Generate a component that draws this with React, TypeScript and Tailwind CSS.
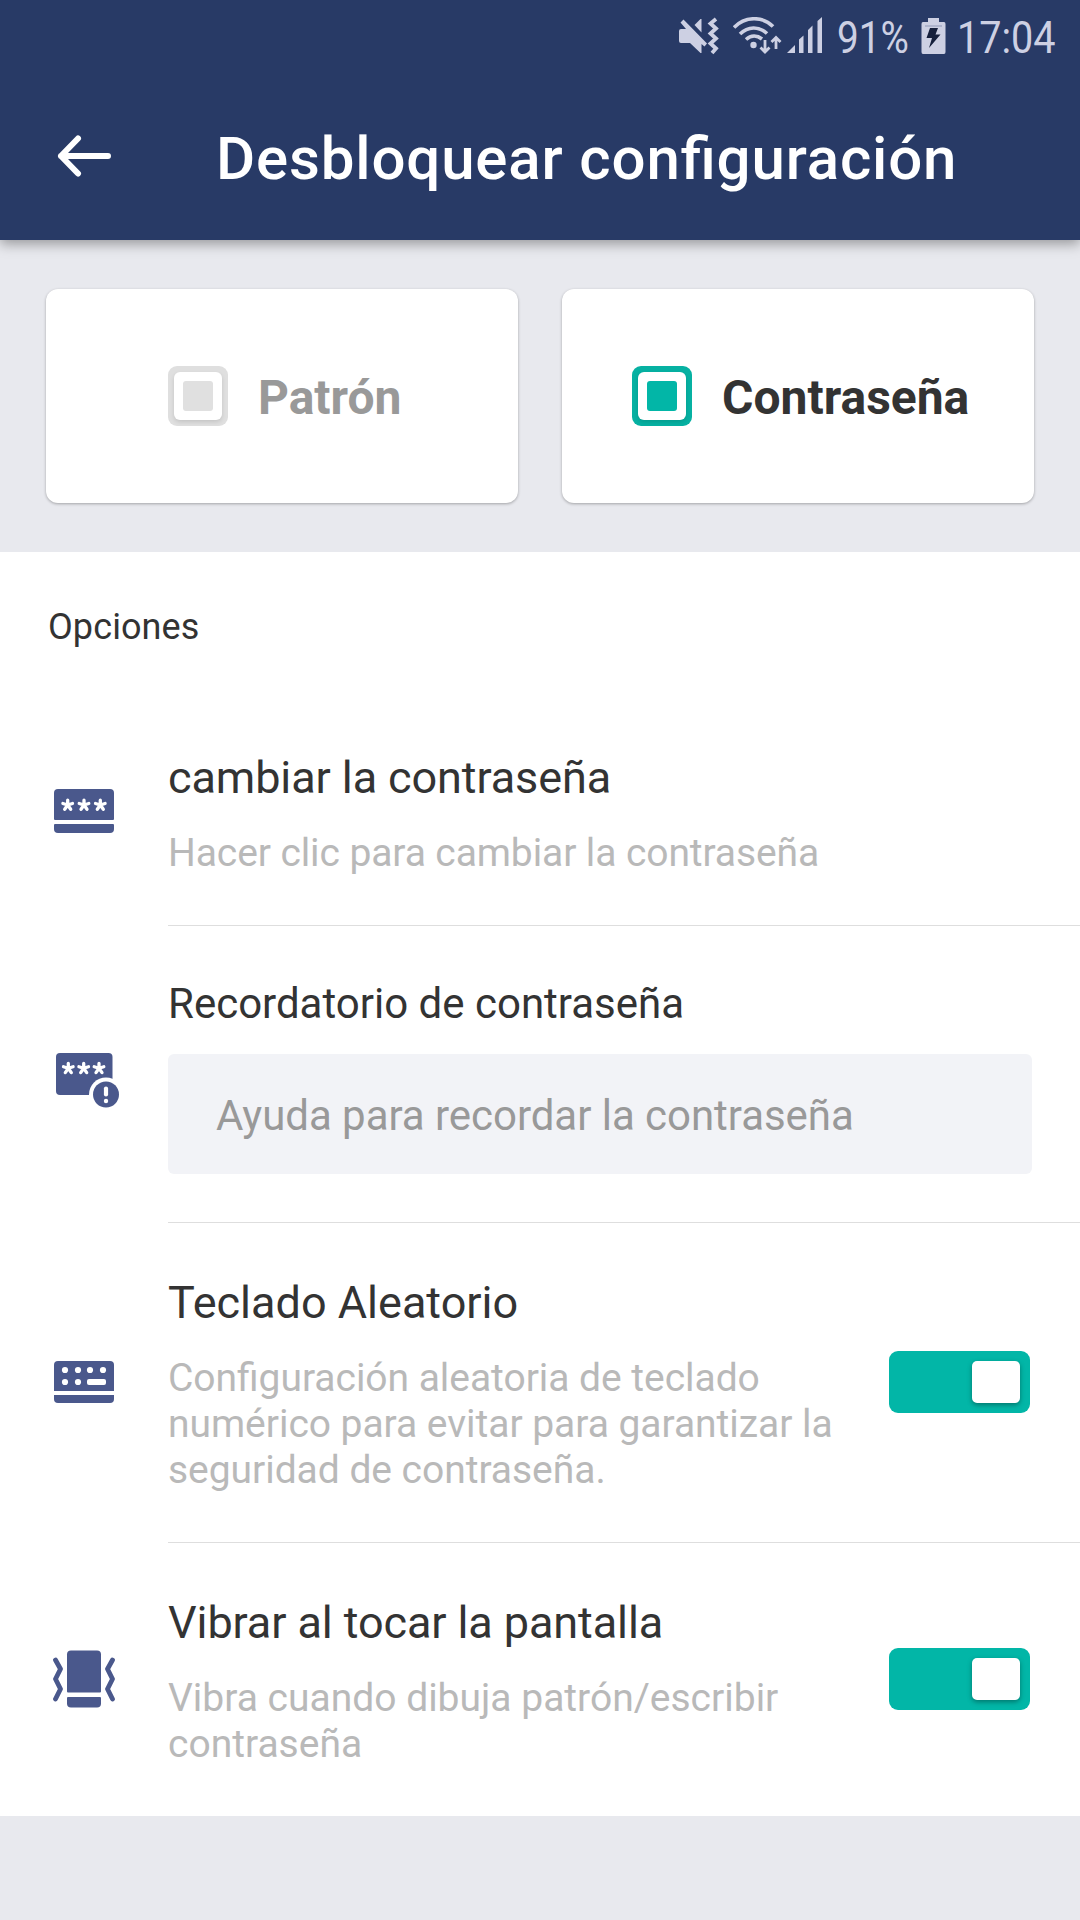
import { useState } from 'react';
import type { ReactNode } from 'react';
import { clsx } from 'clsx';

interface UnlockCardProps {
  label: string;
  selected: boolean;
  onSelect: () => void;
}

interface OptionRowProps {
  icon: ReactNode;
  height: string;
  last?: boolean;
  children: ReactNode;
}

interface ToggleProps {
  label: string;
  checked: boolean;
  onChange: (value: boolean) => void;
}

// One asterisk of the password icons, drawn around 0,0
function Star({ x, y }: { x: number; y: number }) {
  return (
    <path
      transform={`translate(${x} ${y})`}
      d="M0 0V-4.8M0 0L4.8 -1.5M0 0L3 4.3M0 0L-3 4.3M0 0L-4.8 -1.5"
      stroke="#fff"
      strokeWidth="3.3"
      strokeLinecap="round"
    />
  );
}

function PasswordIcon() {
  return (
    <svg width="60" height="45" viewBox="0 0 60 45" fill="none">
      <path d="M4 0H56A4 4 0 0 1 60 4V30Q60 31 59 31H1Q0 31 0 30V4A4 4 0 0 1 4 0Z" fill="#4a588c" />
      <path d="M0 36Q0 35 1 35H59Q60 35 60 36V40A4 4 0 0 1 56 44H4A4 4 0 0 1 0 40Z" fill="#4a588c" />
      <Star x={13.7} y={16} />
      <Star x={30} y={16} />
      <Star x={46.3} y={16} />
    </svg>
  );
}

function ReminderIcon() {
  return (
    <svg width="64" height="60" viewBox="0 0 64 60" fill="none">
      <rect width="56.5" height="42" rx="4" fill="#4a588c" />
      <Star x={12.3} y={15.3} />
      <Star x={27.7} y={15.3} />
      <Star x={43} y={15.3} />
      <circle cx="50" cy="41.5" r="17" fill="#fff" />
      <circle cx="50" cy="41.5" r="13" fill="#4a588c" />
      <path d="M50 35.5V41.5" stroke="#fff" strokeWidth="4.2" strokeLinecap="round" />
      <circle cx="50" cy="48" r="2.2" fill="#fff" />
    </svg>
  );
}

function KeyboardIcon() {
  return (
    <svg width="60" height="42" viewBox="0 0 60 42" fill="none">
      <path d="M4 0H56A4 4 0 0 1 60 4V30H0V4A4 4 0 0 1 4 0Z" fill="#4a588c" />
      <path d="M0 34H60V38A4 4 0 0 1 56 42H4A4 4 0 0 1 0 38Z" fill="#4a588c" />
      <g fill="#fff">
        <circle cx="11" cy="9" r="3.1" />
        <circle cx="24" cy="9" r="3.1" />
        <circle cx="36" cy="9" r="3.1" />
        <circle cx="49" cy="9" r="3.1" />
        <circle cx="11" cy="21" r="3.1" />
        <circle cx="24" cy="21" r="3.1" />
        <rect x="33" y="18" width="19" height="6" rx="2" />
      </g>
    </svg>
  );
}

function VibrateIcon() {
  return (
    <svg width="64" height="58" viewBox="0 0 64 58" fill="none">
      <path d="M18 0.5H44A4 4 0 0 1 48 4.5V41.5Q48 42.5 47 42.5H15Q14 42.5 14 41.5V4.5A4 4 0 0 1 18 0.5Z" fill="#4a588c" />
      <path d="M15 47H47Q48 47 48 48V53.5A4 4 0 0 1 44 57.5H18A4 4 0 0 1 14 53.5V48Q14 47 15 47Z" fill="#4a588c" />
      <path
        d="M2.5 10L7.5 19L2.5 29L7.5 39L2.5 49M59.5 10L54.5 19L59.5 29L54.5 39L59.5 49"
        stroke="#4a588c"
        strokeWidth="4.8"
        strokeLinecap="round"
        strokeLinejoin="round"
      />
    </svg>
  );
}

function StatusBar() {
  return (
    <div className="flex h-[72px] items-center pl-[679px] text-[#cdd0e3]">
      <svg width="40" height="38" viewBox="0 0 40 38" fill="none">
        <path d="M0 14Q0 12 2 12H7L1.5 5.5L4.5 2.5L28 26.5L25.500 29.500L22.500 27V36H21.500L11 26H2Q0 26 0 24Z" fill="currentColor" />
        <path d="M15.500 8L21.500 2H22.500V15.500Z" fill="currentColor" />
        <path d="M37 2L31.500 6.500L37 11.500L31.500 16.500L37 21.500L31.500 26.500L37 31.500L33 36" stroke="currentColor" strokeWidth="3.8" />
      </svg>
      <svg className="ml-[14px]" width="49" height="38" viewBox="0 0 49 38" fill="none">
        <path
          d="M1 10.5C12 -1 30 -1 40 9.5M7 17C15 9 26 9 34 16.5M13 22.5C18 18 24 18 29 22"
          stroke="currentColor"
          strokeWidth="3.6"
        />
        <circle cx="20.5" cy="28" r="3.2" fill="currentColor" />
        <path d="M32 23V35M27.5 30.5L32 35L36.5 30.5M43 32V21M38.5 25L43 20.5L47.5 25" stroke="currentColor" strokeWidth="2.8" />
      </svg>
      <svg className="ml-[5px]" width="37" height="38" viewBox="0 0 37 38" fill="currentColor">
        <path d="M0 36L8 28V36ZM12 22.5L16.5 18.5V36H12ZM21 13L25.5 8.5V36H21ZM30.5 4L35 0V36H30.5Z" />
      </svg>
      <span className="mt-[2px] ml-[13px] w-[84px] origin-left scale-x-[0.86] text-[45px] leading-none whitespace-nowrap">91%</span>
      <svg width="25" height="38" viewBox="0 0 25 38">
        <path d="M7 1H18V5H23Q24.5 5 24.5 7V35Q24.5 37 23 37H2Q0.5 37 0.5 35V7Q0.5 5 2 5H7Z" fill="currentColor" />
        <path d="M4 9H21" stroke="#8e97b5" strokeWidth="1" />
        <path d="M9 11H17L14.5 17.5H19.5L8 31L11 21H5.5Z" fill="#16203c" />
      </svg>
      <span className="mt-[2px] ml-[11px] w-[112px] origin-left scale-x-[0.88] text-[45px] leading-none whitespace-nowrap">17:04</span>
    </div>
  );
}

function UnlockCard({ label, selected, onSelect }: UnlockCardProps) {
  return (
    <button
      onClick={onSelect}
      aria-pressed={selected}
      className={clsx(
        'flex h-[214px] w-[472px] items-center rounded-xl bg-white shadow-[0_1px_3px_rgba(0,0,0,0.3)]',
        selected ? 'pl-[70px]' : 'pl-[122px]'
      )}
    >
      <span
        className={clsx(
          'flex size-[60px] items-center justify-center rounded-[9px]',
          selected ? 'bg-[#06b1a2]' : 'bg-[#dfdfdf]'
        )}
      >
        <span className="flex size-12 items-center justify-center rounded-md bg-white shadow-[0_2px_4px_rgba(0,0,0,0.12)]">
          <span className={clsx('size-[30px] rounded-[3px]', selected ? 'bg-[#02b6a7]' : 'bg-[#e0e0e0]')} />
        </span>
      </span>
      <span className={clsx('mt-1 ml-[30px] text-[48px] leading-none font-bold', selected ? 'text-[#333333]' : 'text-[#999999]')}>
        {label}
      </span>
    </button>
  );
}

function OptionRow({ icon, height, last, children }: OptionRowProps) {
  return (
    <div className={clsx('flex', height)}>
      <div className="w-[168px] shrink-0">{icon}</div>
      <div className={clsx('flex-1', !last && 'border-b border-[#dedede]')}>{children}</div>
    </div>
  );
}

function Toggle({ label, checked, onChange }: ToggleProps) {
  return (
    <button
      role="switch"
      aria-checked={checked}
      aria-label={label}
      onClick={() => onChange(!checked)}
      className={clsx(
        'flex h-[62px] w-[141px] items-center rounded-[9px] px-[10px]',
        checked ? 'justify-end bg-[#02b6a7]' : 'justify-start bg-[#dcdcdc]'
      )}
    >
      <span className="h-[42px] w-12 rounded-[5px] bg-white shadow-[0_2px_5px_rgba(0,0,0,0.35)]" />
    </button>
  );
}

export default function App() {
  const [method, setMethod] = useState<'pattern' | 'password'>('password');
  const [randomKeyboard, setRandomKeyboard] = useState(true);
  const [vibrate, setVibrate] = useState(true);

  return (
    <div className="flex h-[1920px] w-[1080px] flex-col overflow-hidden bg-[#e8e9ee] font-['Roboto',sans-serif] [font-feature-settings:'liga'_1]">
      {/* Header */}
      <header className="z-10 h-60 shrink-0 bg-[#283a66] shadow-[0_4px_12px_rgba(0,0,0,0.35)]">
        <StatusBar />
        <div className="flex h-[168px] items-center">
          <button aria-label="Volver" className="ml-[57px]">
            <svg width="56" height="42" viewBox="0 0 56 42" fill="none" stroke="#fff" strokeWidth="6" strokeLinecap="round" strokeLinejoin="round">
              <path d="M51 21H4M21 3.5L4 21L21 38.5" />
            </svg>
          </button>
          <h1 className="mt-[5px] ml-[103px] text-[60px] leading-none font-medium tracking-[0.85px] whitespace-nowrap text-white">
            Desbloquear configuración
          </h1>
        </div>
      </header>

      {/* Unlock method */}
      <section className="flex h-[312px] shrink-0 gap-[44px] px-[46px] pt-[49px]">
        <UnlockCard label="Patrón" selected={method === 'pattern'} onSelect={() => setMethod('pattern')} />
        <UnlockCard label="Contraseña" selected={method === 'password'} onSelect={() => setMethod('password')} />
      </section>

      {/* Options */}
      <section className="h-[1264px] shrink-0 bg-white">
        <h2 className="h-[153px] pt-[52px] pl-12 text-[36px] leading-[46px] tracking-[0.1px] text-[#333333]">Opciones</h2>

        <OptionRow height="h-[221px]" icon={<div className="pt-[84px] pl-[54px]"><PasswordIcon /></div>}>
          <p className="pt-[46px] text-[45px] leading-[54px] tracking-[-0.1px] text-[#333333]">cambiar la contraseña</p>
          <p className="mt-[25px] text-[39px] leading-[46px] tracking-[-0.1px] text-[#b9b9b9]">Hacer clic para cambiar la contraseña</p>
        </OptionRow>

        <OptionRow height="h-[297px]" icon={<div className="pt-[127px] pl-[56px]"><ReminderIcon /></div>}>
          <p className="pt-[53px] text-[42px] leading-[50px] text-[#333333]">Recordatorio de contraseña</p>
          <input
            type="text"
            placeholder="Ayuda para recordar la contraseña"
            className="mt-[25px] block h-[120px] w-[864px] rounded-md bg-[#f2f3f7] px-12 pt-[3px] text-[42px] tracking-[-0.04px] text-[#333333] outline-none placeholder:text-[#999999]"
          />
        </OptionRow>

        <OptionRow height="h-[320px]" icon={<div className="pt-[138px] pl-[54px]"><KeyboardIcon /></div>}>
          <div className="flex">
            <div className="w-[721px]">
              <p className="pt-[53px] text-[45px] leading-[54px] text-[#333333]">Teclado Aleatorio</p>
              <p className="mt-[25px] w-[680px] text-[39px] leading-[46px] tracking-[-0.04px] text-[#b9b9b9]">
                Configuración aleatoria de teclado numérico para evitar para garantizar la seguridad de contraseña.
              </p>
            </div>
            <div className="pt-[128px]">
              <Toggle label="Teclado Aleatorio" checked={randomKeyboard} onChange={setRandomKeyboard} />
            </div>
          </div>
        </OptionRow>

        <OptionRow last height="h-[273px]" icon={<div className="pt-[107px] pl-[53px]"><VibrateIcon /></div>}>
          <div className="flex">
            <div className="w-[721px]">
              <p className="pt-[53px] text-[45px] leading-[54px] tracking-[-0.1px] text-[#333333]">Vibrar al tocar la pantalla</p>
              <p className="mt-[25px] w-[680px] text-[39px] leading-[46px] text-[#b9b9b9]">
                Vibra cuando dibuja patrón/escribir contraseña
              </p>
            </div>
            <div className="pt-[105px]">
              <Toggle label="Vibrar al tocar la pantalla" checked={vibrate} onChange={setVibrate} />
            </div>
          </div>
        </OptionRow>
      </section>
    </div>
  );
}
